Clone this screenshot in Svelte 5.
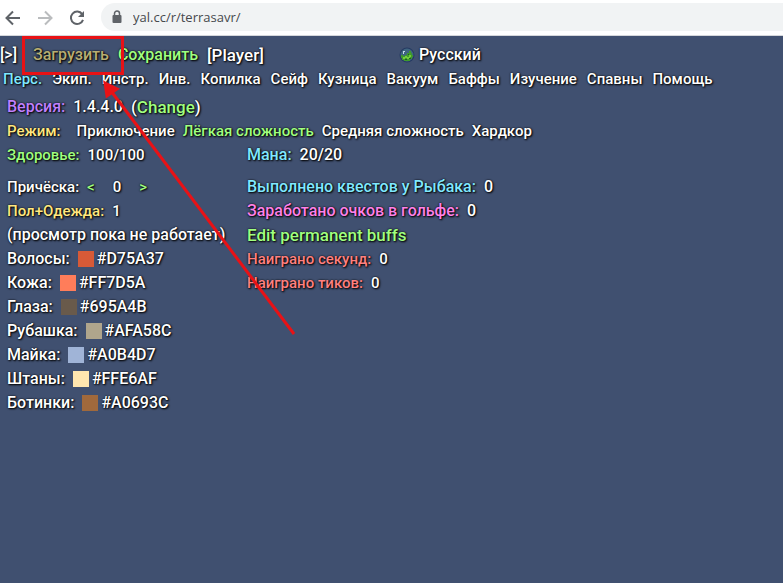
<script lang="ts">
  const tabs = [
    "Перс.",
    "Экип.",
    "Инстр.",
    "Инв.",
    "Копилка",
    "Сейф",
    "Кузница",
    "Вакуум",
    "Баффы",
    "Изучение",
    "Спавны",
    "Помощь",
  ];
  const modes = [
    "Приключение",
    "Лёгкая сложность",
    "Средняя сложность",
    "Хардкор",
  ];
  const colors = [
    { label: "Волосы:", value: "#D75A37" },
    { label: "Кожа:", value: "#FF7D5A" },
    { label: "Глаза:", value: "#695A4B" },
    { label: "Рубашка:", value: "#AFA58C" },
    { label: "Майка:", value: "#A0B4D7" },
    { label: "Штаны:", value: "#FFE6AF" },
    { label: "Ботинки:", value: "#A0693C" },
  ];

  let url = $state("yal.cc/r/terrasavr/");
  let tab = $state("Перс.");
  let mode = $state("Лёгкая сложность");
  let hair = $state(0);
</script>

<header>
  <button aria-label="Back">
    <svg width="16" height="16" viewBox="0 0 16 16">
      <path d="M15 8H2M8 1.5L1.5 8L8 14.5" />
    </svg>
  </button>
  <button aria-label="Forward" class="disabled">
    <svg width="16" height="16" viewBox="0 0 16 16">
      <path d="M1 8H14M8 1.5L14.5 8L8 14.5" />
    </svg>
  </button>
  <button aria-label="Reload">
    <svg width="16" height="16" viewBox="0 0 16 16">
      <path d="M13.2 4.2A6.2 6.2 0 1 0 14 9.8" />
      <path class="solid" d="M15 1V7H9Z" />
    </svg>
  </button>
  <label class="address">
    <svg width="10" height="14" viewBox="0 0 10 14">
      <path class="lock" d="M2.5 6V3.5a2.5 2.5 0 0 1 5 0V6" />
      <rect x="0.5" y="5" width="9" height="8" rx="1" />
    </svg>
    <input type="text" aria-label="Address" bind:value={url} />
  </label>
</header>

<main>
  <div class="row toolbar">
    <div class="row file">
      <button class="toggle">[&gt;]</button>
      <button class="khaki">Загрузить</button>
      <button class="green">Сохранить</button>
      <span class="latin">[Player]</span>
    </div>
    <button class="language">
      <svg width="16" height="16" viewBox="0 0 16 16">
        <circle cx="8" cy="8" r="7.5" fill="#263a62" />
        <circle cx="8" cy="8" r="6.5" fill="#3f6580" />
        <path d="M2 8h2v1h2v-1h2v-2h2v-2h2v2h1v2h1v2h-1v2h-2v2h-6v-1h-2v-2h-1z" fill="#3f9a2c" />
        <path d="M4 10h2v-1h2v1h2v-2h2v2h-1v2h-3v-1h-2v1h-2z" fill="#74cc3c" />
        <path d="M6 12h2v1h-2zM10 11h2v1h-2zM9 7h1v1h-1z" fill="#1d5f22" />
        <path d="M4 4h2v1h-1v2h-1z" fill="#c4d8ea" />
      </svg>
      Русский
    </button>
    <svg class="pointer" width="276" height="304" viewBox="0 0 276 304">
      <rect x="3.5" y="3.5" width="99" height="36" />
      <path d="M274 300L91 57" />
      <path class="tip" d="M85 49L97 55L87 62Z" />
    </svg>
  </div>

  <nav class="row small">
    {#each tabs as name}
      <button class:cyan={name === tab} onclick={() => (tab = name)}>{name}</button>
    {/each}
  </nav>

  <section class="player">
    <div class="row">
      <span class="purple">Версия:</span>
      <span>1.4.4.0</span>
      <span class="latin">(<button class="green">Change</button>)</span>
    </div>
    <div class="row small">
      <span class="yellow mode">Режим:</span>
      {#each modes as name}
        <button class:green={name === mode} onclick={() => (mode = name)}>{name}</button>
      {/each}
    </div>

    <div class="columns vitals">
      <div class="row small"><span class="green">Здоровье:</span> <span>100/100</span></div>
      <div class="row"><span class="cyan">Мана:</span> <span>20/20</span></div>
    </div>

    <div class="columns">
      <div>
        <div class="row small">
          <span>Причёска:</span>
          <span class="stepper">
            <button class="green" onclick={() => (hair -= 1)}>&lt;</button>
            <span>{hair}</span>
            <button class="green" onclick={() => (hair += 1)}>&gt;</button>
          </span>
        </div>
        <div class="row small"><span class="yellow">Пол+Одежда:</span> <span>1</span></div>
        <div class="row">(просмотр пока не работает)</div>
        {#each colors as { label, value }}
          <div class="row">
            <span>{label}</span>
            <button class="color">
              <i class="swatch" style="background: {value}"></i>{value}
            </button>
          </div>
        {/each}
      </div>
      <div>
        <div class="row"><span class="cyan">Выполнено квестов у Рыбака:</span> <span>0</span></div>
        <div class="row"><span class="pink">Заработано очков в гольфе:</span> <span>0</span></div>
        <div class="row"><button class="green latin">Edit permanent buffs</button></div>
        <div class="row small"><span class="red">Наиграно секунд:</span> <span>0</span></div>
        <div class="row small"><span class="red">Наиграно тиков:</span> <span>0</span></div>
      </div>
    </div>
  </section>
</main>

<style>
  :global(body) {
    background: #405070;
  }

  button,
  input {
    margin: 0;
    padding: 0;
    border: 0;
    background: none;
    color: inherit;
    font: inherit;
    text-shadow: inherit;
  }

  button {
    cursor: pointer;
    white-space: nowrap;
  }

  header {
    display: flex;
    align-items: center;
    gap: 16px;
    box-sizing: border-box;
    height: 36px;
    padding-left: 5px;
    background: #fff;
    border-bottom: 1px solid #d5d7db;
  }

  header button {
    display: flex;
    color: #5f6368;
  }

  header button.disabled {
    color: #babcbe;
  }

  header path {
    fill: none;
    stroke: currentColor;
    stroke-width: 2;
  }

  header path.solid {
    fill: currentColor;
    stroke: none;
  }

  .address {
    display: flex;
    flex: 1;
    align-items: center;
    gap: 11px;
    height: 28px;
    padding-left: 11px;
    margin-bottom: 2px;
    background: #f1f3f4;
    border-radius: 14px 0 0 14px;
    color: #5f6368;
  }

  .address rect {
    fill: currentColor;
  }

  .address .lock {
    stroke-width: 1.5;
  }

  .address input {
    flex: 1;
    outline: 0;
    color: #46494d;
    font: 13px "Open Sans", sans-serif;
  }

  main {
    padding-top: 7px;
    color: #fff;
    font: 500 16px/24px Roboto, sans-serif;
    text-shadow: 0 0 2px #000, 1px 1px 2px #000;
  }

  .row {
    display: flex;
    gap: 8px;
    height: 24px;
    white-space: nowrap;
  }

  .small {
    font-size: 15px;
  }

  .latin {
    font-size: 17px;
  }

  .toolbar {
    position: relative;
    gap: 0;
  }

  .file {
    gap: 9px;
    width: 399px;
  }

  .toggle {
    width: 24px;
    text-align: left;
  }

  .language {
    display: flex;
    align-items: center;
    gap: 4px;
  }

  .pointer {
    position: absolute;
    top: -9px;
    left: 20px;
    fill: none;
    stroke: #e81216;
    stroke-width: 3;
    pointer-events: none;
  }

  .pointer .tip {
    fill: #e81216;
  }

  nav.row {
    gap: 10px;
    padding-left: 3px;
  }

  .player {
    padding: 4px 7px;
  }

  .mode {
    margin-right: 8px;
  }

  .columns {
    display: grid;
    grid-template-columns: 240px 1fr;
  }

  .vitals {
    margin-bottom: 8px;
  }

  .stepper {
    display: flex;
    gap: 18px;
  }

  .color {
    display: flex;
    align-items: center;
    gap: 3px;
  }

  .swatch {
    width: 16px;
    height: 16px;
  }

  .khaki {
    color: #b8ad72;
  }

  .green {
    color: #a0ff80;
  }

  .cyan {
    color: #80e8ff;
  }

  .purple {
    color: #c080ff;
  }

  .yellow {
    color: #ffe880;
  }

  .pink {
    color: #ff80e8;
  }

  .red {
    color: #ff8080;
  }
</style>
